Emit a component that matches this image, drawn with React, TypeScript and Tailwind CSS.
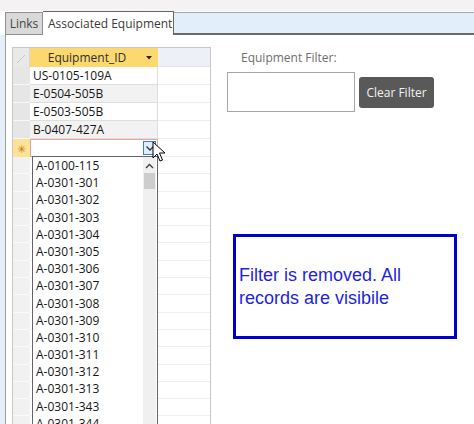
import React from "react";

const dataRows = ["US-0105-109A", "E-0504-505B", "E-0503-505B", "B-0407-427A"];
const listItems = [
  "A-0100-115",
  "A-0301-301",
  "A-0301-302",
  "A-0301-303",
  "A-0301-304",
  "A-0301-305",
  "A-0301-306",
  "A-0301-307",
  "A-0301-308",
  "A-0301-309",
  "A-0301-310",
  "A-0301-311",
  "A-0301-312",
  "A-0301-313",
  "A-0301-343",
  "A-0301-344",
];

function Cursor() {
  return (
    <svg width="14" height="22" viewBox="0 0 14 22" className="absolute left-[152px] top-[141px]">
      <path
        d="M1 1 L1 17 L5 13 L8 20 L10.5 19 L7.5 12 L13 12 Z"
        fill="#ffffff"
        stroke="#000000"
        strokeWidth="1"
        strokeLinejoin="round"
      />
    </svg>
  );
}

export default function App() {
  return (
    <div className="relative w-[474px] h-[424px] overflow-hidden bg-white font-['Open_Sans',sans-serif]">
      {/* top strip */}
      <div className="h-[11px] bg-[#f4f2f2]" />
      {/* tabs */}
      <div className="flex h-[24px]">
        <div className="w-[5px] bg-white" />
        <div className="mt-px w-[38px] bg-[#d9d9d9] border border-[#8f8f8f] flex items-center justify-center text-[12px] text-[#454545]">
          Links
        </div>
        <div className="w-[131px] bg-white border-t border-r border-[#666] flex items-center pl-[5px] text-[12px] text-[#3a3a3a]">
          Associated Equipment
        </div>
        <div className="mt-px flex-1 bg-[#e3eefb] border-t border-[#a8a8a8] border-b-2 border-b-[#6a6a6a]" />
      </div>
      {/* body */}
      <div className="flex h-[389px]">
        <div className="w-[6px] bg-[#e6eef9] border-r border-[#9c9c9c]" />
        {/* datasheet */}
        <div className="ml-[6px] mt-[12px] w-[199px] border border-[#c8c8c8] flex flex-col text-[12px] text-[#161616] self-start h-[400px]">
          {/* header */}
          <div className="flex h-[19px]">
            <div className="w-[17px] bg-[#e9e9e9] border-r border-[#d6d6d6] flex items-end justify-end">
              <svg width="10" height="10" viewBox="0 0 10 10" className="mb-[3px] mr-[3px]">
                <path d="M1 9 L9 1" stroke="#c9c9c9" strokeWidth="1" />
              </svg>
            </div>
            <div className="relative w-[128px] bg-[#fcd96e] flex items-center justify-center pr-[14px] text-[#303030]">
              Equipment_ID
              <svg width="6" height="4" viewBox="0 0 6 4" className="absolute right-[6px] top-[8px]">
                <path d="M0 0 L6 0 L3 3.5 Z" fill="#222" />
              </svg>
            </div>
            <div className="flex-1 bg-[#eef0f8] border-b border-[#e2e4ec]" />
          </div>
          {/* data rows */}
          {dataRows.map((r, i) => (
            <div key={r} className="flex h-[18px]">
              <div className="w-[17px] bg-[#e6e6e6] border-b border-[#f8f8f8]" />
              <div
                className={`w-[128px] border-b border-r border-[#dedede] flex items-center pl-[3px] ${
                  i % 2 === 1 ? "bg-[#f2f2f2]" : "bg-white"
                }`}
              >
                {r}
              </div>
              <div className="flex-1 border-b border-[#ececec]" />
            </div>
          ))}
          {/* new row */}
          <div className="flex h-[18px]">
            <div className="w-[17px] bg-[#fbe294] flex items-center justify-center text-[11px] text-[#c77a12] leading-none">
              ✳
            </div>
            <div className="w-[128px] border border-[#f0a0a0] bg-white" />
            <div className="flex-1 border-b border-[#ececec]" />
          </div>
          {/* empty area */}
          {Array.from({ length: 16 }).map((_, i) => (
            <div key={i} className="flex h-[17.3px] shrink-0">
              <div className="w-[17px] bg-[#f1f1f1] border-b border-[#fafafa]" />
              <div className="w-[128px] border-b border-[#efefef]" />
              <div className="flex-1 border-b border-[#efefef]" />
            </div>
          ))}
        </div>
        {/* right column */}
        <div className="ml-[16px] flex flex-col">
          <div className="pl-[14px] mt-[15px] h-[16px] leading-[16px] text-[12px] text-[#6f6f6f]">
            Equipment Filter:
          </div>
          <div className="flex items-start mt-[6px]">
            <div className="w-[128px] h-[40px] border border-[#a6a6a6] bg-white" />
            <div className="ml-[4px] mt-[5px] w-[75px] h-[31px] rounded-[3px] bg-[#595959] text-[#f2f2f2] text-[12px] flex items-center justify-center">
              Clear Filter
            </div>
          </div>
          <div className="mt-[122px] ml-[6px] w-[224px] h-[105px] border-[3px] border-[#0000cc] flex items-center pl-[3px] font-['Liberation_Sans',Arial,sans-serif] text-[18px] leading-[23px] text-[#1f1fe0]">
            <div>
              Filter is removed. All
              <br />
              records are visibile
            </div>
          </div>
        </div>
      </div>

      {/* dropdown button in new row */}
      <div className="absolute left-[143px] top-[141px] w-[13px] h-[14px] border border-[#3c7fb1] bg-[#dcedfb] flex items-center justify-center">
        <svg width="8" height="5" viewBox="0 0 8 5">
          <path d="M0.5 0.5 L4 4 L7.5 0.5" fill="none" stroke="#333" strokeWidth="1.3" />
        </svg>
      </div>

      {/* dropdown list */}
      <div className="absolute left-[32px] top-[156px] w-[126px] h-[290px] border border-[#646464] bg-white text-[12px] text-[#161616]">
        <div className="flex flex-col">
          {listItems.map((it) => (
            <div key={it} className="h-[17.2px] leading-[17.2px] pl-[3px] shrink-0">
              {it}
            </div>
          ))}
        </div>
        <div className="absolute right-[1px] top-0 w-[13px] h-full bg-[#f0f0f0]">
          <svg width="9" height="6" viewBox="0 0 9 6" className="absolute left-[2px] top-[6px]">
            <path d="M1 5 L4.5 1.5 L8 5" fill="none" stroke="#404040" strokeWidth="1.4" />
          </svg>
          <div className="absolute left-[1px] top-[16px] w-[11px] h-[16px] bg-[#cdcdcd]" />
        </div>
      </div>

      <Cursor />
    </div>
  );
}
